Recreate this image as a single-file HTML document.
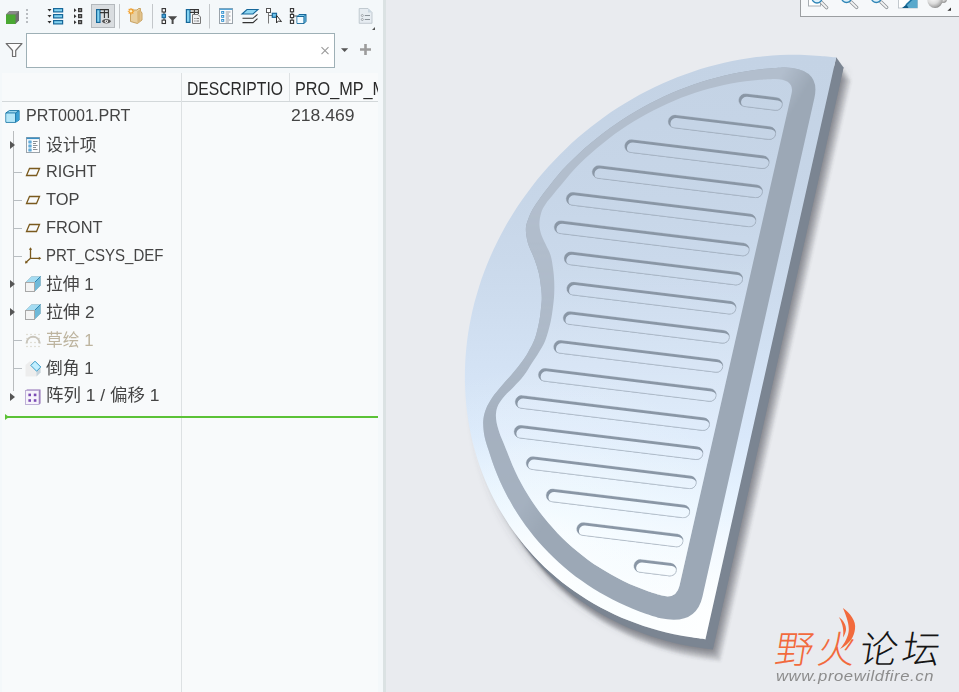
<!DOCTYPE html>
<html lang="zh">
<head>
<meta charset="utf-8">
<title>PRT0001</title>
<style>
html,body{margin:0;padding:0}
body{width:959px;height:692px;overflow:hidden;position:relative;background:#e9ebef;font-family:"Liberation Sans","Noto Sans CJK SC",sans-serif;font-size:17px;color:#444}
#panel{position:absolute;left:2px;top:73px;width:376px;height:619px;background:#f8fafb}
#tbar{position:absolute;left:0;top:0;width:383px;height:692px;background:#f4f8fa}
#sash{position:absolute;left:383px;top:0;width:3px;height:692px;background:#dbe2e3}
#filter{position:absolute;left:26px;top:33px;width:306px;height:33px;background:#fff;border:1px solid #9aabb2;box-sizing:content-box}
.ico{position:absolute}
#hdr{position:absolute;left:2px;top:73px;width:376px;height:28px;border-bottom:1px solid #d3d8da}
#hdr .hc{position:absolute;top:0;height:28px;overflow:hidden}
#hdr span{position:absolute;top:6px;font-size:17.5px;line-height:20px;color:#2a2a2a;white-space:nowrap;transform-origin:0 50%}
.vline{position:absolute;width:1px;background:#dde1e3}
.row{position:absolute;left:0;height:28px;line-height:28px;white-space:nowrap}
.row .t{position:absolute;left:46px;top:0;transform-origin:0 50%;color:#444}
.row .t0{left:26px}
.row .ic{position:absolute;top:5px;width:18px;height:18px}
.row .ic svg{display:block}
.tick{position:absolute;left:14px;width:8px;height:1px;background:#b9bec2}
.arrow{position:absolute;left:10px;width:0;height:0;border-left:5px solid #555;border-top:4px solid transparent;border-bottom:4px solid transparent}
#gtb{position:absolute;left:800px;top:0;width:159px;height:16px;background:#f5f7f9;border-left:1px solid #9a9da0;border-bottom:1px solid #9a9da0}
#wmt{position:absolute;left:772px;top:622px;font-family:"Noto Sans CJK SC",sans-serif;font-size:38px;line-height:50px;letter-spacing:4.3px;white-space:nowrap;transform:skewX(-9deg);transform-origin:0 100%;font-weight:300}
#wmt .o{color:#f26a3d}#wmt .k{color:#151515}
#wmu{position:absolute;top:665.5px;font-size:14.5px;line-height:20px;font-style:italic;color:#8c8c8c;white-space:nowrap;transform-origin:0 50%;letter-spacing:.5px}
</style>
</head>
<body>
<div id="tbar"></div>
<div id="panel"></div>
<div id="sash"></div>
<svg id="tb" width="384" height="72" viewBox="0 0 384 72" style="position:absolute;left:0;top:0">
<!-- green cube -->
<path d="M6 14.5 L9.5 11 H19 V20.5 L15.5 24 H6 Z" fill="#6e6e6e"/>
<path d="M6 14.5 L9.5 11 H19 L15.5 14.5 Z" fill="#8a8a8a"/>
<rect x="6" y="14.5" width="9.5" height="9.5" fill="#4aa832"/>
<!-- grip dots -->
<g fill="#b9bdc1"><rect x="26" y="9" width="2" height="2"/><rect x="26" y="13" width="2" height="2"/><rect x="26" y="17" width="2" height="2"/><rect x="26" y="21" width="2" height="2"/></g>
<!-- expand all -->
<g fill="#333"><path d="M47.5 9 h4 l-2 2.5z M47.5 15 h4 l-2 2.5z M47.5 21 h4 l-2 2.5z"/></g>
<g fill="#84d3f1" stroke="#17689a" stroke-width="1.2"><rect x="53.6" y="8.6" width="9" height="3.3"/><rect x="53.6" y="14.6" width="9" height="3.3"/><rect x="53.6" y="20.6" width="9" height="3.3"/></g>
<!-- collapse all -->
<g fill="#333"><path d="M74 8.3 v4 l2.5 -2z M74 14.3 v4 l2.5 -2z M74 20.3 v4 l2.5 -2z"/></g>
<g fill="#8b8b8b" stroke="#3c3c3c" stroke-width="1.2"><rect x="78.6" y="8.6" width="3" height="3"/><rect x="78.6" y="14.6" width="3" height="3"/><rect x="78.6" y="20.6" width="3" height="3"/></g>
<!-- selected button -->
<rect x="91.5" y="4.5" width="23" height="23" fill="#d9dde0" stroke="#b4b9bd"/>
<rect x="96.6" y="9.6" width="3.4" height="12.8" fill="#84d3f1" stroke="#17689a" stroke-width="1.2"/>
<path d="M100 9.6 H108.4 V18 M100 12.6 H108.4 M104.4 9.6 V18" fill="none" stroke="#333" stroke-width="1.1"/>
<path d="M101.8 21.3 C103.5 18.3 109.3 18.3 111 21.3 C109.3 24.3 103.5 24.3 101.8 21.3 Z" fill="#555"/><circle cx="106.4" cy="21.3" r="1.6" fill="#fff"/><circle cx="106.4" cy="21.3" r=".7" fill="#444"/>
<!-- separators -->
<g stroke="#c3c7ca" stroke-width="1"><path d="M119.5 4V28.5M152.5 4V28.5M209.5 4V28.5"/></g>
<!-- folder star -->
<path d="M130.5 10 H137 L138.5 8.5 H140.5 V11 L142 13 V20 L137.5 23.5 L130.5 21.5 Z" fill="#e9cf9f" stroke="#c39a55" stroke-width=".9"/>
<path d="M137.2 11.5 L140.5 9 V20.5 L137.5 23.5 Z" fill="#d9b679"/>
<g stroke="#f39a1f" stroke-width="1.1"><path d="M131 8 V14.5M127.8 11.2H134.2M128.7 8.9L133.3 13.5M133.3 8.9L128.7 13.5"/></g><circle cx="131" cy="11.2" r="1.2" fill="#fff2c8"/>
<!-- tree filter -->
<path d="M164 10 V22" stroke="#333" stroke-width="1"/>
<g fill="#fff" stroke="#333" stroke-width="1.1"><rect x="162.1" y="8.6" width="3.4" height="3.4"/><rect x="162.1" y="20.1" width="3.4" height="3.4"/></g><rect x="162.1" y="14.3" width="3.4" height="3.4" fill="#4aa3d8" stroke="#17689a" stroke-width="1.1"/>
<path d="M168 16.2 H177.2 L173.6 20 V24 H171.6 V20 Z" fill="#4a4a4a"/>
<!-- table doc -->
<rect x="186.4" y="9.6" width="3.6" height="12.8" fill="#84d3f1" stroke="#17689a" stroke-width="1.2"/>
<path d="M190 9.6 H198.4 V14 M190 12.4 H198.4 M194.4 9.6 V14" fill="none" stroke="#333" stroke-width="1.1"/>
<path d="M192.5 14.5 H198 L200.5 17 V23.5 H192.5 Z" fill="#f0f2f4" stroke="#777" stroke-width="1"/><path d="M194.3 18.5H195.5M196.5 18.5H199M194.3 21H195.5M196.5 21H199" stroke="#777" stroke-width="1"/>
<!-- list doc -->
<rect x="219.5" y="8.5" width="13" height="15" fill="#fbfcfd" stroke="#9aa3aa"/><rect x="219.5" y="8.5" width="13" height="1.5" fill="#5aa7d6"/>
<g fill="#2f8fce"><rect x="221.2" y="11" width="3" height="2.8"/><rect x="221.2" y="15" width="3" height="2.8"/><rect x="221.2" y="19" width="3" height="2.8"/></g><g fill="#fff"><rect x="222.2" y="11.9" width="1" height="1"/><rect x="222.2" y="15.9" width="1" height="1"/><rect x="222.2" y="19.9" width="1" height="1"/></g>
<path d="M225.7 12H230.5M225.7 14H229M225.7 16H230.5M225.7 18H229M225.7 20H230.5M225.7 22H229" stroke="#8a8f94" stroke-width=".9"/>
<!-- layers -->
<path d="M242 14 L247 9.5 H258 L253 14 Z" fill="#8fd6f2" stroke="#17689a" stroke-width="1.1"/>
<path d="M242.5 18.3 H253 L257.5 14.3 M242.5 22.6 H253 L257.5 18.6" fill="none" stroke="#333" stroke-width="1.1"/>
<!-- tree select -->
<rect x="266.5" y="8.5" width="4" height="4" fill="#fff" stroke="#555" stroke-width="1"/><path d="M268.5 12.5V23.5M268.5 15.5H272" stroke="#777" stroke-width="1"/>
<rect x="272.3" y="13.3" width="4.2" height="4" fill="#6fc3ea" stroke="#17689a" stroke-width="1.2"/>
<path d="M276.5 15.3 V23 L278.4 21 L281.5 21.6 Z" fill="#fff" stroke="#333" stroke-width="1"/>
<!-- tree part -->
<path d="M292 10 V22M292 16H297" stroke="#555" stroke-width="1"/>
<g fill="#fff" stroke="#333" stroke-width="1.1"><rect x="290.4" y="8.6" width="3.2" height="3.2"/><rect x="290.4" y="14.4" width="3.2" height="3.2"/><rect x="290.4" y="20.2" width="3.2" height="3.2"/></g>
<path d="M297 16.5 L299 14.5 H306 V21.5 L304 23.5 H297 Z" fill="#7cc9ea" stroke="#17689a" stroke-width="1"/><rect x="297.4" y="16.9" width="6.2" height="6.2" fill="#f2fbff"/><path d="M297 16.5H304V23.5M304 16.5L306 14.5" fill="none" stroke="#17689a" stroke-width="1"/>
<!-- doc settings -->
<path d="M359.2 8.5 H368 L372 12.5 V23.3 H359.2 Z" fill="#e6ecf1" stroke="#bcc5cc" stroke-width=".9"/><path d="M368 8.5 V12.5 H372 Z" fill="#c9d6e0"/>
<circle cx="362.3" cy="15.5" r="1" fill="#fff" stroke="#8a9299" stroke-width=".8"/><circle cx="362.3" cy="19.5" r="1" fill="#fff" stroke="#8a9299" stroke-width=".8"/><path d="M364.8 15.5H370M364.8 19.5H370" stroke="#8a9299" stroke-width="1"/>
<path d="M375 27 V30 H372 Z" fill="#555"/>
<!-- filter row -->
<path d="M6.2 43.5 H22 L15.7 50.5 V56.5 H12.5 V50.5 Z" fill="#fdfdfd" stroke="#6f6f6f" stroke-width="1.2" stroke-linejoin="round"/>
<rect x="26.5" y="33.5" width="308" height="34" fill="#fff" stroke="#9eb0b6"/>
<path d="M321.5 47.2 L328.5 54.2 M328.5 47.2 L321.5 54.2" stroke="#9a9a9a" stroke-width="1.1"/>
<path d="M341 48.2 H348.2 L344.6 52 Z" fill="#555"/>
<path d="M365.5 44 V55 M360 49.5 H371" stroke="#9c9c9c" stroke-width="2.6"/>
</svg>

<div id="hdr"><div class="hc" style="left:180px;width:101.5px"><span style="transform:scaleX(0.8971);left:5px">DESCRIPTION</span></div><div class="hc" style="left:288px;width:88px"><span style="transform:scaleX(0.9269);left:5px">PRO_MP_MASS</span></div></div>
<div class="vline" style="left:181px;top:73px;height:619px"></div>
<div class="vline" style="left:289px;top:73px;height:28px"></div>
<div style="position:absolute;left:13px;top:131px;width:1px;height:260px;background:#b9bcbe"></div>
<div class="row" style="top:102.7px">
<span class="ic" style="left:5.0px"><svg width="18" height="18" viewBox="0 0 18 18"><path d="M0.9 4.9 L4.4 2.6 H14.1 V12 L10.6 14.3 H0.9 Z" fill="#a9e1f6" stroke="#1b79a8" stroke-width="1"/><path d="M10.6 4.9 L14.1 2.6 V12 L10.6 14.3 Z" fill="#3aa0d4"/><rect x="1.4" y="5.4" width="8.7" height="8.4" fill="#b4e6f8"/><path d="M0.9 4.9 H10.6 V14.3 M10.6 4.9 L14.1 2.6" fill="none" stroke="#1b79a8" stroke-width="1"/></svg></span>
<span class="t" style="transform:scaleX(0.9496);left:26.3px;top:-0.5px">PRT0001.PRT</span>
</div>
<div class="row" style="top:130.8px">
<i class="arrow" style="top:10px"></i>
<span class="ic" style="left:23.5px"><svg width="18" height="18" viewBox="0 0 18 18"><rect x="2.5" y="1.5" width="13" height="15" fill="#fbfcfd" stroke="#9aa3aa"/><rect x="2.5" y="1.5" width="13" height="1.6" fill="#3b8fc4"/><g fill="#2f8fce"><rect x="4.5" y="4.6" width="3" height="2.8"/><rect x="4.5" y="8.6" width="3" height="2.8"/><rect x="4.5" y="12.6" width="3" height="2.8"/></g><g fill="#fff"><rect x="5.5" y="5.5" width="1" height="1"/><rect x="5.5" y="9.5" width="1" height="1"/><rect x="5.5" y="13.5" width="1" height="1"/></g><g stroke="#8a8f94" stroke-width="1"><path d="M9 5.5H13.5M9 7.5H12M9 9.5H13.5M9 11.5H12M9 13.5H13.5"/></g></svg></span>
<span class="t" style="transform:scaleX(0.9902);left:45.9px;top:1.0px">设计项</span>
</div>
<div class="row" style="top:157.5px">
<i class="tick" style="top:14px"></i>
<span class="ic" style="left:23.5px"><svg width="18" height="18" viewBox="0 0 18 18"><path d="M5.5 5.5 H15.5 L12.5 12.5 H2.5 Z" fill="none" stroke="#7a5a1e" stroke-width="1.3"/></svg></span>
<span class="t" style="transform:scaleX(0.9548);left:45.9px;top:0.0px">RIGHT</span>
</div>
<div class="row" style="top:185.6px">
<i class="tick" style="top:14px"></i>
<span class="ic" style="left:23.5px"><svg width="18" height="18" viewBox="0 0 18 18"><path d="M5.5 5.5 H15.5 L12.5 12.5 H2.5 Z" fill="none" stroke="#7a5a1e" stroke-width="1.3"/></svg></span>
<span class="t" style="transform:scaleX(0.9671);left:45.9px;top:0.0px">TOP</span>
</div>
<div class="row" style="top:213.7px">
<i class="tick" style="top:14px"></i>
<span class="ic" style="left:23.5px"><svg width="18" height="18" viewBox="0 0 18 18"><path d="M5.5 5.5 H15.5 L12.5 12.5 H2.5 Z" fill="none" stroke="#7a5a1e" stroke-width="1.3"/></svg></span>
<span class="t" style="transform:scaleX(0.9650);left:45.9px;top:0.0px">FRONT</span>
</div>
<div class="row" style="top:241.9px">
<i class="tick" style="top:14px"></i>
<span class="ic" style="left:23.5px"><svg width="18" height="18" viewBox="0 0 18 18"><path d="M6.5 1.5 V11.3 H16 M6.5 11.3 L1.8 15.6" fill="none" stroke="#7a5a1e" stroke-width="1.3"/><path d="M6.5 0.3 L4.9 2.8 H8.1 Z M17.3 11.3 L14.8 9.7 V12.9 Z M1 16.4 L1.6 13.6 L3.9 15.9 Z" fill="#7a5a1e"/></svg></span>
<span class="t" style="transform:scaleX(0.8841);left:45.9px;top:0.0px">PRT_CSYS_DEF</span>
</div>
<div class="row" style="top:270.0px">
<i class="arrow" style="top:10px"></i>
<span class="ic" style="left:23.5px"><svg width="18" height="18" viewBox="0 0 18 18"><path d="M1.5 7.5 L7.5 1.5 H16.5 V10.5 L10.5 16.5 H1.5 Z" fill="#c9ecfa" stroke="#a9b2b8" stroke-width=".8"/><path d="M10.5 7.5 L16.5 1.5 V10.5 L10.5 16.5 Z" fill="#6fb9d8"/><path d="M1.5 7.5 L7.5 1.5 H16.5 L10.5 7.5 Z" fill="#a5dcf2"/><path d="M10.5 7.5 L16.5 1.5" stroke="#2b86b3" stroke-width="1"/><rect x="1.5" y="7.5" width="9" height="9" fill="#f3f3f3" stroke="#a8a8a8" stroke-width="1"/></svg></span>
<span class="t" style="transform:scaleX(0.9857);left:45.9px;top:1.0px">拉伸 1</span>
</div>
<div class="row" style="top:298.1px">
<i class="arrow" style="top:10px"></i>
<span class="ic" style="left:23.5px"><svg width="18" height="18" viewBox="0 0 18 18"><path d="M1.5 7.5 L7.5 1.5 H16.5 V10.5 L10.5 16.5 H1.5 Z" fill="#c9ecfa" stroke="#a9b2b8" stroke-width=".8"/><path d="M10.5 7.5 L16.5 1.5 V10.5 L10.5 16.5 Z" fill="#6fb9d8"/><path d="M1.5 7.5 L7.5 1.5 H16.5 L10.5 7.5 Z" fill="#a5dcf2"/><path d="M10.5 7.5 L16.5 1.5" stroke="#2b86b3" stroke-width="1"/><rect x="1.5" y="7.5" width="9" height="9" fill="#f3f3f3" stroke="#a8a8a8" stroke-width="1"/></svg></span>
<span class="t" style="transform:scaleX(1.0065);left:45.9px;top:1.0px">拉伸 2</span>
</div>
<div class="row" style="top:326.2px">
<i class="tick" style="top:14px"></i>
<span class="ic" style="left:23.5px"><svg width="18" height="18" viewBox="0 0 18 18"><g fill="#d9d5c8"><circle cx="3" cy="3.5" r=".8"/><circle cx="7" cy="3.5" r=".8"/><circle cx="11" cy="3.5" r=".8"/><circle cx="15" cy="3.5" r=".8"/><circle cx="3" cy="7.5" r=".8"/><circle cx="15" cy="7.5" r=".8"/><circle cx="3" cy="11.5" r=".8"/><circle cx="7" cy="11.5" r=".8"/><circle cx="11" cy="11.5" r=".8"/><circle cx="15" cy="11.5" r=".8"/><circle cx="3" cy="15.5" r=".8"/><circle cx="7" cy="15.5" r=".8"/><circle cx="11" cy="15.5" r=".8"/><circle cx="15" cy="15.5" r=".8"/></g><path d="M2.5 12.5 C3 3.5 15 3.5 15.8 12.5" fill="none" stroke="#c9c5bb" stroke-width="2"/></svg></span>
<span class="t" style="transform:scaleX(0.9857);left:45.9px;top:1.0px;color:#bdb49f">草绘 1</span>
</div>
<div class="row" style="top:354.4px">
<i class="tick" style="top:14px"></i>
<span class="ic" style="left:23.5px"><svg width="18" height="18" viewBox="0 0 18 18"><path d="M1.5 6 L5.5 2.5 H11 L16.5 8 V13.5 L12.5 17.5 H1.5 Z" fill="#ededed"/><path d="M12.5 12 L16.5 8 V13.5 L12.5 17.5 Z" fill="#c5d3dc"/><path d="M11 2.2 L16.8 8 L12.6 12.2 L6.8 6.4 Z" fill="#c2efff" stroke="#3a9cc8" stroke-width="1"/></svg></span>
<span class="t" style="transform:scaleX(0.9857);left:45.9px;top:1.0px">倒角 1</span>
</div>
<div class="row" style="top:382.5px">
<i class="arrow" style="top:10px"></i>
<span class="ic" style="left:23.5px"><svg width="18" height="18" viewBox="0 0 18 18"><path d="M1.5 2.5 L3 1.5 H16.5 V15.5 L15 16.5 H1.5 Z" fill="#8d6bb3"/><rect x="1.5" y="2.5" width="13.5" height="14" fill="#f6f3fb" stroke="#b9a9d3" stroke-width=".8"/><g fill="#7b4ab5"><rect x="4.4" y="5.6" width="2.6" height="2.6"/><rect x="9.8" y="5.6" width="2.6" height="2.6"/><rect x="4.4" y="11.2" width="2.6" height="2.6"/><rect x="9.8" y="11.2" width="2.6" height="2.6"/></g></svg></span>
<span class="t" style="transform:scaleX(1.0269);left:45.9px;top:-0.6px">阵列 1 / 偏移 1</span>
</div>
<div class="row" style="top:102.2px"><span class="t" style="transform:scaleX(1.0333);left:291px">218.469</span></div>
<div style="position:absolute;left:6px;top:416px;width:372px;height:2px;background:#5bc236"></div>
<div style="position:absolute;left:5px;top:413.5px;width:0;height:0;border-left:4px solid #5bc236;border-top:3.5px solid transparent;border-bottom:3.5px solid transparent"></div>
<svg id="part" width="575" height="692" viewBox="384 0 575 692" style="position:absolute;left:384px;top:0">
<defs>
<path id="tf" d="M836.2 57.3 C833.6 57.1 825.7 56.3 820.4 55.9 C815.1 55.5 809.8 55.1 804.5 54.9 C799.2 54.7 793.8 54.7 788.5 54.8 C783.2 54.9 777.8 55.1 772.4 55.5 C767.1 55.9 761.7 56.4 756.3 57.1 C751.0 57.8 745.6 58.6 740.3 59.5 C734.9 60.5 729.6 61.5 724.3 62.8 C719.0 64.0 713.7 65.3 708.4 66.8 C703.1 68.3 697.9 69.9 692.7 71.7 C687.5 73.4 682.3 75.3 677.2 77.3 C672.0 79.4 666.9 81.5 661.9 83.8 C656.9 86.1 651.9 88.5 646.9 91.0 C642.0 93.5 637.1 96.2 632.3 98.9 C627.5 101.7 622.7 104.6 618.1 107.6 C613.4 110.6 608.8 113.7 604.2 117.0 C599.7 120.2 595.3 123.5 590.9 127.0 C586.5 130.4 582.2 134.0 578.0 137.6 C573.8 141.3 569.7 145.0 565.7 148.9 C561.7 152.7 557.8 156.7 554.0 160.7 C550.1 164.7 546.4 168.9 542.8 173.1 C539.2 177.3 535.7 181.6 532.3 185.9 C528.9 190.3 525.6 194.8 522.5 199.3 C519.3 203.8 516.3 208.4 513.4 213.0 C510.4 217.7 507.6 222.4 504.9 227.2 C502.3 232.0 499.7 236.8 497.3 241.7 C494.9 246.6 492.6 251.5 490.4 256.5 C488.2 261.5 486.2 266.5 484.3 271.6 C482.4 276.6 480.6 281.7 479.0 286.9 C477.4 292.0 475.9 297.1 474.5 302.3 C473.2 307.5 472.0 312.7 470.9 317.9 C469.8 323.1 468.9 328.4 468.1 333.6 C467.3 338.8 466.7 344.1 466.2 349.3 C465.7 354.5 465.3 359.8 465.1 365.0 C464.9 370.3 464.8 375.6 464.9 380.9 C465.0 386.1 465.2 391.4 465.6 396.6 C465.9 401.8 466.4 407.1 467.1 412.2 C467.8 417.4 468.6 422.5 469.5 427.6 C470.5 432.7 471.6 437.8 472.8 442.8 C474.1 447.8 475.5 452.8 477.0 457.7 C478.5 462.6 480.2 467.5 482.0 472.3 C483.8 477.1 485.8 481.8 487.9 486.5 C490.0 491.2 492.2 495.8 494.5 500.3 C496.9 504.8 499.4 509.3 502.0 513.6 C504.6 518.0 507.4 522.3 510.2 526.5 C513.1 530.7 516.1 534.8 519.2 538.8 C522.3 542.8 525.6 546.8 528.9 550.6 C532.3 554.4 535.7 558.1 539.3 561.7 C542.9 565.4 546.6 568.9 550.4 572.3 C554.2 575.7 558.1 579.0 562.1 582.2 C566.1 585.3 570.2 588.4 574.4 591.3 C578.6 594.3 582.9 597.1 587.2 599.8 C591.6 602.5 596.1 605.1 600.6 607.5 C605.2 610.0 609.8 612.3 614.5 614.5 C619.2 616.7 624.0 618.7 628.8 620.6 C633.6 622.6 638.5 624.3 643.5 626.0 C648.5 627.6 653.5 629.2 658.6 630.5 C663.6 631.9 668.8 633.1 673.9 634.2 C679.1 635.3 684.4 636.2 689.6 637.1 C694.8 638.0 702.8 639.0 705.4 639.4 Z"/>
<path id="gin" d="M791.5 93.8 Q794.9 79.2 774.8 78.9 C772.4 79.0 765.1 79.3 760.3 79.7 C755.4 80.0 750.5 80.6 745.7 81.2 C740.8 81.9 736.0 82.6 731.2 83.5 C726.3 84.5 721.5 85.5 716.7 86.7 C711.9 87.9 707.1 89.2 702.4 90.6 C697.6 92.0 692.9 93.6 688.2 95.3 C683.5 96.9 678.8 98.8 674.2 100.7 C669.6 102.6 665.0 104.7 660.5 106.9 C656.0 109.0 651.5 111.3 647.1 113.7 C642.7 116.1 638.3 118.7 634.0 121.3 C629.7 124.0 625.5 126.7 621.3 129.6 C617.1 132.4 613.0 135.4 609.0 138.5 C605.0 141.5 601.0 144.7 597.1 148.0 C593.2 151.3 589.5 154.6 585.7 158.1 C582.0 161.6 578.4 165.1 574.9 168.8 C571.4 172.5 568.4 176.2 565.0 180.3 C561.6 184.4 557.5 189.3 554.2 193.3 C551.0 197.3 547.7 200.9 545.5 204.2 C543.3 207.4 542.2 209.5 541.2 212.8 C540.2 216.1 539.4 220.5 539.4 224.0 C539.4 227.5 540.0 230.4 541.0 233.7 C542.0 237.0 543.9 240.4 545.5 244.0 C547.1 247.6 549.2 250.9 550.5 255.0 C551.8 259.1 552.5 264.5 553.1 268.8 C553.7 273.1 554.0 276.8 554.2 281.0 C554.4 285.2 554.4 289.8 554.2 294.0 C554.0 298.2 553.7 301.3 553.1 306.0 C552.5 310.7 551.9 316.2 550.6 322.0 C549.3 327.8 547.3 335.4 545.3 340.5 C543.3 345.6 541.0 348.6 538.8 352.4 C536.6 356.1 534.5 359.1 532.0 363.0 C529.5 366.9 526.7 371.9 523.7 375.8 C520.7 379.8 517.1 383.3 513.9 386.7 C510.6 390.1 506.8 393.3 504.2 396.4 C501.6 399.5 499.6 402.2 498.2 405.1 C496.8 408.0 496.3 410.9 496.0 413.8 C495.7 416.7 496.1 419.3 496.6 422.4 C497.2 425.5 498.4 429.3 499.3 432.2 C500.2 435.1 500.9 436.6 502.3 440.0 C503.7 443.4 505.8 448.5 507.5 452.8 C509.2 457.0 510.8 461.3 512.6 465.5 C514.4 469.7 516.4 473.8 518.4 477.9 C520.5 481.9 522.7 485.9 525.0 489.9 C527.3 493.8 529.7 497.6 532.2 501.4 C534.7 505.2 537.3 508.9 540.0 512.5 C542.7 516.1 545.6 519.7 548.5 523.1 C551.4 526.5 554.5 529.9 557.6 533.2 C560.7 536.4 563.9 539.6 567.3 542.7 C570.6 545.7 574.0 548.7 577.5 551.6 C581.0 554.5 584.6 557.2 588.2 559.9 C591.9 562.6 595.6 565.1 599.5 567.6 C603.3 570.0 607.2 572.3 611.2 574.6 C615.1 576.8 619.2 578.9 623.3 580.9 C627.4 582.9 631.6 584.8 635.8 586.5 C640.0 588.3 644.3 589.9 648.6 591.5 C653.0 593.0 659.6 594.9 661.8 595.6 Q676.4 599.3 679.5 585.7 Z"/>
<linearGradient id="gTop" gradientUnits="userSpaceOnUse" x1="0" y1="57" x2="0" y2="640">
<stop offset="0" stop-color="#c4d3e5"/><stop offset=".117" stop-color="#c5d4e6"/><stop offset=".245" stop-color="#c7d6e8"/><stop offset=".348" stop-color="#cad9eb"/><stop offset=".417" stop-color="#cddcee"/><stop offset=".527" stop-color="#d3e2f4"/><stop offset=".65" stop-color="#d9e8fa"/><stop offset=".774" stop-color="#e8f4ff"/><stop offset=".837" stop-color="#f3f9ff"/><stop offset=".897" stop-color="#fafdff"/><stop offset=".95" stop-color="#ffffff"/>
</linearGradient>
<radialGradient id="gHi" gradientUnits="userSpaceOnUse" cx="540" cy="580" r="215">
<stop offset="0" stop-color="#fff" stop-opacity=".92"/><stop offset=".35" stop-color="#f6fdff" stop-opacity=".52"/><stop offset=".7" stop-color="#f0fbff" stop-opacity=".18"/><stop offset="1" stop-color="#f0fbff" stop-opacity="0"/>
</radialGradient>
<linearGradient id="gIn" gradientUnits="userSpaceOnUse" x1="0" y1="250" x2="0" y2="420">
<stop offset="0" stop-color="#fff" stop-opacity="0"/><stop offset="1" stop-color="#fff" stop-opacity=".17"/>
</linearGradient>
<linearGradient id="mA" gradientUnits="userSpaceOnUse" x1="0" y1="200" x2="0" y2="620">
<stop offset="0" stop-color="#fff"/><stop offset=".31" stop-color="#ccc"/><stop offset=".452" stop-color="#999"/><stop offset=".524" stop-color="#666"/><stop offset=".667" stop-color="#6e6e6e"/><stop offset=".786" stop-color="#636363"/><stop offset=".881" stop-color="#333"/><stop offset="1" stop-color="#000"/>
</linearGradient>
<linearGradient id="mB" gradientUnits="userSpaceOnUse" x1="783" y1="70.8" x2="808.5" y2="86.1">
<stop offset="0" stop-color="#000" stop-opacity="0"/><stop offset="1" stop-color="#000" stop-opacity="1"/>
</linearGradient>
<mask id="mBand" maskUnits="userSpaceOnUse" x="384" y="0" width="575" height="692">
<rect x="384" y="0" width="575" height="692" fill="url(#mA)"/>
<rect x="384" y="-400" width="900" height="1500" fill="url(#mB)"/>
</mask>
<filter id="blur" x="-20%" y="-20%" width="140%" height="140%"><feGaussianBlur stdDeviation="1"/></filter>
<clipPath id="sc0"><path d="M746.0 93.7 L776.8 97.4 A6.6 6.6 0 0 1 775.2 110.6 L744.4 106.8 A6.6 6.6 0 0 1 746.0 93.7 Z"/></clipPath>
<clipPath id="sc1"><path d="M675.4 115.0 L770.2 126.5 A6.6 6.6 0 0 1 768.6 139.7 L673.8 128.1 A6.6 6.6 0 0 1 675.4 115.0 Z"/></clipPath>
<clipPath id="sc2"><path d="M631.9 139.6 L763.6 155.6 A6.6 6.6 0 0 1 762.0 168.8 L630.3 152.7 A6.6 6.6 0 0 1 631.9 139.6 Z"/></clipPath>
<clipPath id="sc3"><path d="M599.4 165.5 L756.9 184.7 A6.6 6.6 0 0 1 755.3 197.9 L597.8 178.6 A6.6 6.6 0 0 1 599.4 165.5 Z"/></clipPath>
<clipPath id="sc4"><path d="M573.4 192.3 L750.3 213.8 A6.6 6.6 0 0 1 748.7 227.0 L571.8 205.4 A6.6 6.6 0 0 1 573.4 192.3 Z"/></clipPath>
<clipPath id="sc5"><path d="M561.4 220.7 L743.7 242.9 A6.6 6.6 0 0 1 742.1 256.1 L559.8 233.8 A6.6 6.6 0 0 1 561.4 220.7 Z"/></clipPath>
<clipPath id="sc6"><path d="M571.5 251.8 L737.1 272.0 A6.6 6.6 0 0 1 735.5 285.2 L569.9 265.0 A6.6 6.6 0 0 1 571.5 251.8 Z"/></clipPath>
<clipPath id="sc7"><path d="M574.0 282.1 L730.5 301.1 A6.6 6.6 0 0 1 728.9 314.3 L572.4 295.2 A6.6 6.6 0 0 1 574.0 282.1 Z"/></clipPath>
<clipPath id="sc8"><path d="M570.4 311.5 L723.8 330.2 A6.6 6.6 0 0 1 722.2 343.4 L568.8 324.6 A6.6 6.6 0 0 1 570.4 311.5 Z"/></clipPath>
<clipPath id="sc9"><path d="M560.9 340.3 L717.2 359.3 A6.6 6.6 0 0 1 715.6 372.5 L559.3 353.4 A6.6 6.6 0 0 1 560.9 340.3 Z"/></clipPath>
<clipPath id="sc10"><path d="M545.6 368.3 L710.6 388.4 A6.6 6.6 0 0 1 709.0 401.6 L544.0 381.4 A6.6 6.6 0 0 1 545.6 368.3 Z"/></clipPath>
<clipPath id="sc11"><path d="M522.4 395.4 L704.0 417.5 A6.6 6.6 0 0 1 702.4 430.7 L520.8 408.5 A6.6 6.6 0 0 1 522.4 395.4 Z"/></clipPath>
<clipPath id="sc12"><path d="M521.3 425.2 L697.4 446.6 A6.6 6.6 0 0 1 695.8 459.8 L519.7 438.3 A6.6 6.6 0 0 1 521.3 425.2 Z"/></clipPath>
<clipPath id="sc13"><path d="M533.4 456.6 L690.7 475.7 A6.6 6.6 0 0 1 689.1 488.9 L531.8 469.7 A6.6 6.6 0 0 1 533.4 456.6 Z"/></clipPath>
<clipPath id="sc14"><path d="M553.4 488.9 L684.1 504.8 A6.6 6.6 0 0 1 682.5 518.0 L551.8 502.0 A6.6 6.6 0 0 1 553.4 488.9 Z"/></clipPath>
<clipPath id="sc15"><path d="M583.9 522.5 L677.5 533.9 A6.6 6.6 0 0 1 675.9 547.1 L582.3 535.6 A6.6 6.6 0 0 1 583.9 522.5 Z"/></clipPath>
<clipPath id="sc16"><path d="M641.1 559.4 L670.9 563.0 A6.6 6.6 0 0 1 669.3 576.2 L639.5 572.5 A6.6 6.6 0 0 1 641.1 559.4 Z"/></clipPath>
</defs>
<filter id="blur2" x="-20%" y="-20%" width="140%" height="140%"><feGaussianBlur stdDeviation="4.5"/></filter>
<use href="#tf" transform="translate(9,15)" fill="#50555c" fill-opacity=".3" filter="url(#blur2)"/>
<g filter="url(#blur)">
<use href="#tf" transform="translate(7.3,10.2)" fill="#50555c" fill-opacity=".11"/>
<use href="#tf" transform="translate(8.6,12.2)" fill="#50555c" fill-opacity=".11"/>
<use href="#tf" transform="translate(9.9,14.3)" fill="#50555c" fill-opacity=".11"/>
<use href="#tf" transform="translate(11.2,16.4)" fill="#50555c" fill-opacity=".11"/>
<use href="#tf" transform="translate(12.6,18.4)" fill="#50555c" fill-opacity=".11"/>
<use href="#tf" transform="translate(13.9,20.5)" fill="#50555c" fill-opacity=".11"/>
<use href="#tf" transform="translate(15.2,22.5)" fill="#50555c" fill-opacity=".11"/>
</g>
<use href="#tf" transform="translate(7.3,10.2)" fill="#7b8592"/>
<path d="M836.2 57.3 L843.5 67.5 L712.6999999999999 649.6 L705.4 639.4 Z" fill="#7b8592"/>
<use href="#tf" fill="url(#gTop)"/>
<use href="#tf" fill="url(#gHi)"/>
<path d="M814.4 98.0 Q821.0 68.8 785.0 67.6 C782.5 67.7 774.8 68.0 769.7 68.4 C764.6 68.8 759.5 69.3 754.4 70.0 C749.3 70.7 744.2 71.5 739.1 72.5 C734.0 73.4 728.9 74.5 723.9 75.7 C718.8 76.9 713.8 78.2 708.7 79.7 C703.7 81.1 698.7 82.7 693.8 84.4 C688.8 86.2 683.9 88.0 679.0 90.0 C674.2 91.9 669.3 94.0 664.5 96.2 C659.8 98.4 655.0 100.8 650.3 103.2 C645.7 105.6 641.0 108.2 636.4 110.9 C631.9 113.6 627.4 116.3 622.9 119.2 C618.5 122.1 614.1 125.1 609.8 128.3 C605.5 131.4 601.3 134.6 597.1 137.9 C593.0 141.2 588.9 144.6 584.9 148.1 C581.0 151.6 577.1 155.3 573.3 159.0 C569.5 162.6 565.7 166.4 562.1 170.3 C558.6 174.2 555.5 178.1 552.0 182.5 C548.5 186.9 544.5 192.1 541.2 196.6 C538.0 201.1 534.7 205.8 532.5 209.6 C530.3 213.4 529.3 216.4 528.2 219.3 C527.1 222.2 526.3 224.2 526.0 227.0 C525.7 229.8 525.9 232.6 526.4 235.8 C526.9 239.0 527.5 242.1 528.9 246.0 C530.3 249.9 532.9 254.8 534.6 259.4 C536.3 264.0 537.8 268.7 538.9 273.5 C540.0 278.3 540.6 283.9 541.1 288.0 C541.6 292.1 541.8 294.7 541.8 298.0 C541.8 301.3 541.4 304.2 541.0 308.0 C540.6 311.8 540.3 315.9 539.3 321.0 C538.3 326.1 536.9 333.1 535.0 338.3 C533.1 343.5 530.4 348.1 528.0 352.4 C525.6 356.6 523.3 359.9 520.4 363.8 C517.5 367.7 514.0 372.0 510.7 375.8 C507.4 379.6 504.0 383.1 500.9 386.7 C497.8 390.3 494.7 393.9 492.3 397.5 C489.9 401.1 487.8 404.7 486.3 408.3 C484.8 411.9 483.8 415.6 483.4 419.2 C482.9 422.8 483.3 426.5 483.6 430.0 C483.9 433.5 484.4 436.0 485.4 440.0 C486.4 444.0 488.3 449.3 489.8 453.9 C491.3 458.6 492.8 463.2 494.5 467.7 C496.2 472.3 498.1 476.8 500.0 481.2 C502.0 485.6 504.1 489.9 506.3 494.2 C508.6 498.5 510.9 502.7 513.4 506.9 C515.8 511.0 518.4 515.1 521.1 519.0 C523.8 523.0 526.6 526.9 529.6 530.7 C532.5 534.5 535.5 538.2 538.7 541.9 C541.8 545.5 545.1 549.0 548.5 552.5 C551.8 555.9 555.3 559.2 558.9 562.5 C562.4 565.7 566.1 568.8 569.9 571.9 C573.6 574.9 577.5 577.8 581.4 580.6 C585.4 583.4 589.4 586.1 593.5 588.7 C597.6 591.3 601.8 593.7 606.1 596.1 C610.4 598.4 614.7 600.6 619.1 602.8 C623.5 604.9 628.0 606.8 632.6 608.7 C637.1 610.5 641.7 612.3 646.4 613.9 C651.1 615.5 658.2 617.6 660.6 618.3 Q695.9 625.7 702.5 596.5 Z" fill="#9ca8b6"/>
<path d="M814.4 98.0 Q821.0 68.8 785.0 67.6 C782.5 67.7 774.8 68.0 769.7 68.4 C764.6 68.8 759.5 69.3 754.4 70.0 C749.3 70.7 744.2 71.5 739.1 72.5 C734.0 73.4 728.9 74.5 723.9 75.7 C718.8 76.9 713.8 78.2 708.7 79.7 C703.7 81.1 698.7 82.7 693.8 84.4 C688.8 86.2 683.9 88.0 679.0 90.0 C674.2 91.9 669.3 94.0 664.5 96.2 C659.8 98.4 655.0 100.8 650.3 103.2 C645.7 105.6 641.0 108.2 636.4 110.9 C631.9 113.6 627.4 116.3 622.9 119.2 C618.5 122.1 614.1 125.1 609.8 128.3 C605.5 131.4 601.3 134.6 597.1 137.9 C593.0 141.2 588.9 144.6 584.9 148.1 C581.0 151.6 577.1 155.3 573.3 159.0 C569.5 162.6 565.7 166.4 562.1 170.3 C558.6 174.2 555.5 178.1 552.0 182.5 C548.5 186.9 544.5 192.1 541.2 196.6 C538.0 201.1 534.7 205.8 532.5 209.6 C530.3 213.4 529.3 216.4 528.2 219.3 C527.1 222.2 526.3 224.2 526.0 227.0 C525.7 229.8 525.9 232.6 526.4 235.8 C526.9 239.0 527.5 242.1 528.9 246.0 C530.3 249.9 532.9 254.8 534.6 259.4 C536.3 264.0 537.8 268.7 538.9 273.5 C540.0 278.3 540.6 283.9 541.1 288.0 C541.6 292.1 541.8 294.7 541.8 298.0 C541.8 301.3 541.4 304.2 541.0 308.0 C540.6 311.8 540.3 315.9 539.3 321.0 C538.3 326.1 536.9 333.1 535.0 338.3 C533.1 343.5 530.4 348.1 528.0 352.4 C525.6 356.6 523.3 359.9 520.4 363.8 C517.5 367.7 514.0 372.0 510.7 375.8 C507.4 379.6 504.0 383.1 500.9 386.7 C497.8 390.3 494.7 393.9 492.3 397.5 C489.9 401.1 487.8 404.7 486.3 408.3 C484.8 411.9 483.8 415.6 483.4 419.2 C482.9 422.8 483.3 426.5 483.6 430.0 C483.9 433.5 484.4 436.0 485.4 440.0 C486.4 444.0 488.3 449.3 489.8 453.9 C491.3 458.6 492.8 463.2 494.5 467.7 C496.2 472.3 498.1 476.8 500.0 481.2 C502.0 485.6 504.1 489.9 506.3 494.2 C508.6 498.5 510.9 502.7 513.4 506.9 C515.8 511.0 518.4 515.1 521.1 519.0 C523.8 523.0 526.6 526.9 529.6 530.7 C532.5 534.5 535.5 538.2 538.7 541.9 C541.8 545.5 545.1 549.0 548.5 552.5 C551.8 555.9 555.3 559.2 558.9 562.5 C562.4 565.7 566.1 568.8 569.9 571.9 C573.6 574.9 577.5 577.8 581.4 580.6 C585.4 583.4 589.4 586.1 593.5 588.7 C597.6 591.3 601.8 593.7 606.1 596.1 C610.4 598.4 614.7 600.6 619.1 602.8 C623.5 604.9 628.0 606.8 632.6 608.7 C637.1 610.5 641.7 612.3 646.4 613.9 C651.1 615.5 658.2 617.6 660.6 618.3 Q695.9 625.7 702.5 596.5 Z" fill="#b2becd" mask="url(#mBand)"/>
<use href="#gin" fill="url(#gTop)"/>
<use href="#gin" fill="url(#gHi)"/>
<use href="#gin" fill="url(#gIn)"/>
<path d="M746.0 93.7 L776.8 97.4 A6.6 6.6 0 0 1 775.2 110.6 L744.4 106.8 A6.6 6.6 0 0 1 746.0 93.7 Z M747.1 96.7 L777.9 100.4 A5.6 5.6 0 0 1 776.5 111.6 L745.7 107.8 A5.6 5.6 0 0 1 747.1 96.7 Z" fill="#8996a5" fill-rule="evenodd" clip-path="url(#sc0)"/>
<path d="M746.0 94.0 L776.8 97.7 A6.3 6.3 0 0 1 775.2 110.3 L744.4 106.5 A6.3 6.3 0 0 1 746.0 94.0 Z" fill="none" stroke="#93a0af" stroke-opacity=".8" stroke-width=".7"/>
<path d="M675.4 115.0 L770.2 126.5 A6.6 6.6 0 0 1 768.6 139.7 L673.8 128.1 A6.6 6.6 0 0 1 675.4 115.0 Z M676.5 118.0 L771.3 129.5 A5.6 5.6 0 0 1 769.9 140.7 L675.1 129.1 A5.6 5.6 0 0 1 676.5 118.0 Z" fill="#8996a5" fill-rule="evenodd" clip-path="url(#sc1)"/>
<path d="M675.4 115.3 L770.1 126.8 A6.3 6.3 0 0 1 768.6 139.4 L673.8 127.8 A6.3 6.3 0 0 1 675.4 115.3 Z" fill="none" stroke="#93a0af" stroke-opacity=".8" stroke-width=".7"/>
<path d="M631.9 139.6 L763.6 155.6 A6.6 6.6 0 0 1 762.0 168.8 L630.3 152.7 A6.6 6.6 0 0 1 631.9 139.6 Z M633.0 142.6 L764.6 158.6 A5.6 5.6 0 0 1 763.3 169.8 L631.6 153.7 A5.6 5.6 0 0 1 633.0 142.6 Z" fill="#8996a5" fill-rule="evenodd" clip-path="url(#sc2)"/>
<path d="M631.9 139.9 L763.5 155.9 A6.3 6.3 0 0 1 762.0 168.5 L630.3 152.4 A6.3 6.3 0 0 1 631.9 139.9 Z" fill="none" stroke="#93a0af" stroke-opacity=".8" stroke-width=".7"/>
<path d="M599.4 165.5 L756.9 184.7 A6.6 6.6 0 0 1 755.3 197.9 L597.8 178.6 A6.6 6.6 0 0 1 599.4 165.5 Z M600.5 168.5 L758.0 187.7 A5.6 5.6 0 0 1 756.7 198.9 L599.1 179.6 A5.6 5.6 0 0 1 600.5 168.5 Z" fill="#8996a5" fill-rule="evenodd" clip-path="url(#sc3)"/>
<path d="M599.4 165.8 L756.9 185.0 A6.3 6.3 0 0 1 755.4 197.6 L597.8 178.3 A6.3 6.3 0 0 1 599.4 165.8 Z" fill="none" stroke="#93a0af" stroke-opacity=".8" stroke-width=".7"/>
<path d="M573.4 192.3 L750.3 213.8 A6.6 6.6 0 0 1 748.7 227.0 L571.8 205.4 A6.6 6.6 0 0 1 573.4 192.3 Z M574.5 195.3 L751.4 216.8 A5.6 5.6 0 0 1 750.0 228.0 L573.1 206.4 A5.6 5.6 0 0 1 574.5 195.3 Z" fill="#8996a5" fill-rule="evenodd" clip-path="url(#sc4)"/>
<path d="M573.4 192.6 L750.3 214.1 A6.3 6.3 0 0 1 748.8 226.7 L571.8 205.1 A6.3 6.3 0 0 1 573.4 192.6 Z" fill="none" stroke="#93a0af" stroke-opacity=".8" stroke-width=".7"/>
<path d="M561.4 220.7 L743.7 242.9 A6.6 6.6 0 0 1 742.1 256.1 L559.8 233.8 A6.6 6.6 0 0 1 561.4 220.7 Z M562.5 223.7 L744.8 245.9 A5.6 5.6 0 0 1 743.4 257.1 L561.1 234.8 A5.6 5.6 0 0 1 562.5 223.7 Z" fill="#8996a5" fill-rule="evenodd" clip-path="url(#sc5)"/>
<path d="M561.4 221.0 L743.7 243.2 A6.3 6.3 0 0 1 742.1 255.8 L559.8 233.5 A6.3 6.3 0 0 1 561.4 221.0 Z" fill="none" stroke="#93a0af" stroke-opacity=".8" stroke-width=".7"/>
<path d="M571.5 251.8 L737.1 272.0 A6.6 6.6 0 0 1 735.5 285.2 L569.9 265.0 A6.6 6.6 0 0 1 571.5 251.8 Z M572.6 254.8 L738.2 275.0 A5.6 5.6 0 0 1 736.8 286.2 L571.2 266.0 A5.6 5.6 0 0 1 572.6 254.8 Z" fill="#8996a5" fill-rule="evenodd" clip-path="url(#sc6)"/>
<path d="M571.5 252.1 L737.0 272.3 A6.3 6.3 0 0 1 735.5 284.9 L569.9 264.7 A6.3 6.3 0 0 1 571.5 252.1 Z" fill="none" stroke="#93a0af" stroke-opacity=".8" stroke-width=".7"/>
<path d="M574.0 282.1 L730.5 301.1 A6.6 6.6 0 0 1 728.9 314.3 L572.4 295.2 A6.6 6.6 0 0 1 574.0 282.1 Z M575.1 285.1 L731.5 304.1 A5.6 5.6 0 0 1 730.2 315.3 L573.7 296.2 A5.6 5.6 0 0 1 575.1 285.1 Z" fill="#8996a5" fill-rule="evenodd" clip-path="url(#sc7)"/>
<path d="M574.0 282.4 L730.4 301.4 A6.3 6.3 0 0 1 728.9 314.0 L572.4 294.9 A6.3 6.3 0 0 1 574.0 282.4 Z" fill="none" stroke="#93a0af" stroke-opacity=".8" stroke-width=".7"/>
<path d="M570.4 311.5 L723.8 330.2 A6.6 6.6 0 0 1 722.2 343.4 L568.8 324.6 A6.6 6.6 0 0 1 570.4 311.5 Z M571.5 314.5 L724.9 333.2 A5.6 5.6 0 0 1 723.6 344.4 L570.1 325.6 A5.6 5.6 0 0 1 571.5 314.5 Z" fill="#8996a5" fill-rule="evenodd" clip-path="url(#sc8)"/>
<path d="M570.4 311.8 L723.8 330.5 A6.3 6.3 0 0 1 722.3 343.1 L568.8 324.3 A6.3 6.3 0 0 1 570.4 311.8 Z" fill="none" stroke="#93a0af" stroke-opacity=".8" stroke-width=".7"/>
<path d="M560.9 340.3 L717.2 359.3 A6.6 6.6 0 0 1 715.6 372.5 L559.3 353.4 A6.6 6.6 0 0 1 560.9 340.3 Z M562.0 343.3 L718.3 362.3 A5.6 5.6 0 0 1 716.9 373.5 L560.6 354.4 A5.6 5.6 0 0 1 562.0 343.3 Z" fill="#8996a5" fill-rule="evenodd" clip-path="url(#sc9)"/>
<path d="M560.9 340.6 L717.2 359.6 A6.3 6.3 0 0 1 715.7 372.2 L559.3 353.1 A6.3 6.3 0 0 1 560.9 340.6 Z" fill="none" stroke="#93a0af" stroke-opacity=".8" stroke-width=".7"/>
<path d="M545.6 368.3 L710.6 388.4 A6.6 6.6 0 0 1 709.0 401.6 L544.0 381.4 A6.6 6.6 0 0 1 545.6 368.3 Z M546.7 371.3 L711.7 391.4 A5.6 5.6 0 0 1 710.3 402.6 L545.3 382.4 A5.6 5.6 0 0 1 546.7 371.3 Z" fill="#8996a5" fill-rule="evenodd" clip-path="url(#sc10)"/>
<path d="M545.6 368.6 L710.6 388.7 A6.3 6.3 0 0 1 709.0 401.3 L544.0 381.1 A6.3 6.3 0 0 1 545.6 368.6 Z" fill="none" stroke="#93a0af" stroke-opacity=".8" stroke-width=".7"/>
<path d="M522.4 395.4 L704.0 417.5 A6.6 6.6 0 0 1 702.4 430.7 L520.8 408.5 A6.6 6.6 0 0 1 522.4 395.4 Z M523.5 398.4 L705.1 420.5 A5.6 5.6 0 0 1 703.7 431.7 L522.1 409.5 A5.6 5.6 0 0 1 523.5 398.4 Z" fill="#8996a5" fill-rule="evenodd" clip-path="url(#sc11)"/>
<path d="M522.4 395.7 L703.9 417.8 A6.3 6.3 0 0 1 702.4 430.4 L520.8 408.2 A6.3 6.3 0 0 1 522.4 395.7 Z" fill="none" stroke="#93a0af" stroke-opacity=".8" stroke-width=".7"/>
<path d="M521.3 425.2 L697.4 446.6 A6.6 6.6 0 0 1 695.8 459.8 L519.7 438.3 A6.6 6.6 0 0 1 521.3 425.2 Z M522.4 428.2 L698.4 449.6 A5.6 5.6 0 0 1 697.1 460.8 L521.0 439.3 A5.6 5.6 0 0 1 522.4 428.2 Z" fill="#8996a5" fill-rule="evenodd" clip-path="url(#sc12)"/>
<path d="M521.3 425.5 L697.3 446.9 A6.3 6.3 0 0 1 695.8 459.5 L519.7 438.0 A6.3 6.3 0 0 1 521.3 425.5 Z" fill="none" stroke="#93a0af" stroke-opacity=".8" stroke-width=".7"/>
<path d="M533.4 456.6 L690.7 475.7 A6.6 6.6 0 0 1 689.1 488.9 L531.8 469.7 A6.6 6.6 0 0 1 533.4 456.6 Z M534.5 459.5 L691.8 478.7 A5.6 5.6 0 0 1 690.5 489.9 L533.1 470.7 A5.6 5.6 0 0 1 534.5 459.5 Z" fill="#8996a5" fill-rule="evenodd" clip-path="url(#sc13)"/>
<path d="M533.4 456.9 L690.7 476.0 A6.3 6.3 0 0 1 689.2 488.6 L531.8 469.4 A6.3 6.3 0 0 1 533.4 456.9 Z" fill="none" stroke="#93a0af" stroke-opacity=".8" stroke-width=".7"/>
<path d="M553.4 488.9 L684.1 504.8 A6.6 6.6 0 0 1 682.5 518.0 L551.8 502.0 A6.6 6.6 0 0 1 553.4 488.9 Z M554.5 491.9 L685.2 507.8 A5.6 5.6 0 0 1 683.8 519.0 L553.1 503.0 A5.6 5.6 0 0 1 554.5 491.9 Z" fill="#8996a5" fill-rule="evenodd" clip-path="url(#sc14)"/>
<path d="M553.4 489.2 L684.1 505.1 A6.3 6.3 0 0 1 682.6 517.7 L551.8 501.7 A6.3 6.3 0 0 1 553.4 489.2 Z" fill="none" stroke="#93a0af" stroke-opacity=".8" stroke-width=".7"/>
<path d="M583.9 522.5 L677.5 533.9 A6.6 6.6 0 0 1 675.9 547.1 L582.3 535.6 A6.6 6.6 0 0 1 583.9 522.5 Z M585.0 525.5 L678.6 536.9 A5.6 5.6 0 0 1 677.2 548.1 L583.6 536.6 A5.6 5.6 0 0 1 585.0 525.5 Z" fill="#8996a5" fill-rule="evenodd" clip-path="url(#sc15)"/>
<path d="M583.9 522.8 L677.5 534.2 A6.3 6.3 0 0 1 675.9 546.8 L582.3 535.3 A6.3 6.3 0 0 1 583.9 522.8 Z" fill="none" stroke="#93a0af" stroke-opacity=".8" stroke-width=".7"/>
<path d="M641.1 559.4 L670.9 563.0 A6.6 6.6 0 0 1 669.3 576.2 L639.5 572.5 A6.6 6.6 0 0 1 641.1 559.4 Z M642.2 562.4 L672.0 566.0 A5.6 5.6 0 0 1 670.6 577.2 L640.8 573.5 A5.6 5.6 0 0 1 642.2 562.4 Z" fill="#8996a5" fill-rule="evenodd" clip-path="url(#sc16)"/>
<path d="M641.1 559.7 L670.8 563.3 A6.3 6.3 0 0 1 669.3 575.9 L639.5 572.2 A6.3 6.3 0 0 1 641.1 559.7 Z" fill="none" stroke="#93a0af" stroke-opacity=".8" stroke-width=".7"/>
</svg>
<svg id="gtbs" width="160" height="18" viewBox="800 0 160 18" style="position:absolute;left:800px;top:0">
<rect x="800.5" y="-1" width="160" height="17.5" fill="#f6f8fa" stroke="#9b9ea1"/>
<rect x="808.5" y="-3" width="12" height="9" fill="#fff" stroke="#a8aeb3"/>
<g stroke-linecap="round"><path d="M821 2 L826.6 7.6" stroke="#8a8f94" stroke-width="3.4"/><path d="M821 2 L826.6 7.6" stroke="#f4f4f4" stroke-width="1.8"/>
<path d="M851 2 L856.6 7.4" stroke="#8a8f94" stroke-width="3.4"/><path d="M851 2 L856.6 7.4" stroke="#f4f4f4" stroke-width="1.8"/>
<path d="M881 2 L886.6 7.4" stroke="#8a8f94" stroke-width="3.4"/><path d="M881 2 L886.6 7.4" stroke="#f4f4f4" stroke-width="1.8"/></g>
<g fill="#dff1fa" stroke="#2f86b8" stroke-width="1.3"><circle cx="817" cy="-2" r="5"/><circle cx="846.5" cy="-2.5" r="5"/><circle cx="876.3" cy="-2.5" r="5"/></g>
<rect x="898.5" y="-3" width="19" height="11" fill="#fff" stroke="#b5bcc2" stroke-width=".8"/>
<path d="M917.5 -3 V8 H903 L914 -3 Z" fill="#5aa9cc"/><path d="M902 8 L906.5 4.5 L908.5 8 Z" fill="#125c86"/><path d="M906 5 L914.5 -3" stroke="#1f76a3" stroke-width="1.6"/>
<defs><radialGradient id="sph" cx=".38" cy=".3" r=".75"><stop offset="0" stop-color="#ffffff"/><stop offset=".55" stop-color="#dcdcdc"/><stop offset=".85" stop-color="#a8a8a8"/><stop offset="1" stop-color="#7a7a7a"/></radialGradient></defs>
<circle cx="943" cy="-1" r="4" fill="url(#sph)"/><circle cx="935" cy="0.5" r="7.6" fill="url(#sph)"/>
<path d="M951 7.4 V10.8 H947.4 Z" fill="#333"/>
</svg>
<div id="wmt"><span class="o">野火</span><span class="k">论坛</span></div>
<svg width="40" height="50" viewBox="825 605 40 50" style="position:absolute;left:825px;top:605px"><path d="M842.9 608 C850 613 856.5 621 855 629 C854 637 850 643.5 840 649 C845 643 848.5 636 848.8 630 C849 624 847 618 842.9 608 Z M838.8 617 C843 620 846.5 625 846 630 C845.5 633 844.5 635 843 637.5 C844 631 843 624 838.8 617 Z" fill="#f26a3d"/></svg>
<div id="wmu" style="transform:scaleX(1.1479);left:776px">www.proewildfire.cn</div>

</body>
</html>
